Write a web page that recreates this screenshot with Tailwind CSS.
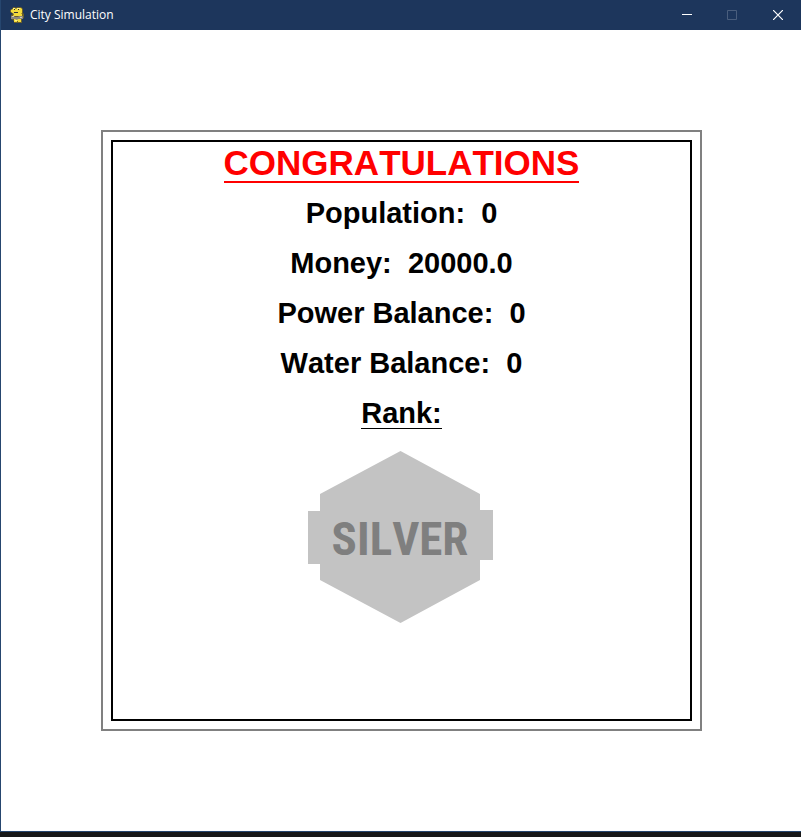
<!DOCTYPE html>
<html lang="en">
<head>
<meta charset="utf-8">
<meta name="viewport" content="width=device-width, initial-scale=1">
<title>City Simulation</title>
<script src="https://cdn.jsdelivr.net/npm/@tailwindcss/browser@4"></script>
</head>
<body class="flex min-h-screen flex-col bg-[#181818]">
<div class="flex grow flex-col border-b border-l border-[#26466f] bg-white">
  <header class="flex h-[30px] items-center bg-[#1d365c] text-white">
    <svg class="ml-2 mr-1 h-[18px] w-[17px]" viewBox="0 0 17 18" aria-hidden="true">
      <path fill="#6b5f2c" d="M4 1h2l1 1 1-1h4l2 2v4l1 1v4l-2 1v4H5v-2l-3-2V9l2-1-3-2V4l2-1z"/>
      <path fill="#f4dc3c" d="M4 2h2l1 1 1-1h4l1 1v4l-1 1H5L2 6V4l2-1zM5 8h8v2H4zM5 13h7v3H9v-1H8v1H5z"/>
      <path fill="#fff48a" d="M4 2h2v1H4zM8 2h3v1H8zM6 14h2v1H6z"/>
      <path fill="#333" d="M5 3h1v1H5zM9 3h1v1H9zM5 6h4v1H5z"/>
      <path fill="#8d887c" d="M2 10h3l1 1h3l1-1h4v3H9l-1 1-2-1H2z"/>
      <path fill="#d0cbbd" d="M3 10h2v1H3zM11 11h2v1h-2z"/>
    </svg>
    <span class="grow font-['Open_Sans','Noto_Sans',sans-serif] text-[12px] leading-4">City Simulation</span>
    <div class="flex h-full">
      <button type="button" aria-label="Minimize" class="flex w-[46px] items-center justify-center">
        <svg class="h-[10px] w-[10px]" viewBox="0 0 10 10"><path fill="#fff" d="M0 4h10v1H0z"/></svg>
      </button>
      <button type="button" aria-label="Maximize" disabled class="flex w-[44px] items-center justify-center">
        <svg class="h-[10px] w-[10px]" viewBox="0 0 10 10"><path fill="none" stroke="#4a5e7d" d="M.5.5h9v9h-9z"/></svg>
      </button>
      <button type="button" aria-label="Close" class="flex w-[47px] items-center justify-center">
        <svg class="h-[10px] w-[10px]" viewBox="0 0 10 10"><path stroke="#fff" stroke-width="1.2" d="M0 0l10 10M10 0L0 10"/></svg>
      </button>
    </div>
  </header>
  <main class="py-[100px] pl-[100px] pr-[99px]">
    <section class="flex aspect-square flex-col border-2 border-[#808080] p-2">
      <div class="flex grow flex-col items-center border-2 border-black font-['Liberation_Sans',Arial,sans-serif] text-[29px] font-bold leading-[50px] text-black [font-kerning:none]">
        <h1 class="border-b-2 border-[#ff0000] pt-[2px] text-[35px] leading-[37px] text-[#ff0000]">CONGRATULATIONS</h1>
        <div class="mt-[5px] text-center">
          <p class="whitespace-pre">Population:  0</p>
          <p class="whitespace-pre">Money:  20000.0</p>
          <p class="whitespace-pre">Power Balance:  0</p>
          <p class="whitespace-pre">Water Balance:  0</p>
        </div>
        <h2 class="mt-[9px] border-b border-black pt-[2px] leading-[29px]">Rank:</h2>
        <svg class="mt-[22px] h-[172px] w-[187px]" viewBox="0 0 187 172" role="img" aria-label="Silver rank">
          <path fill="#c3c3c3" d="M92.5 0L172 43V59H185V109H172V129L92.5 172L12 129V113H0V60H12V43Z"/>
          <text x="92" y="104" text-anchor="middle" fill="#7f7f7f" class="font-['Roboto_Condensed','Roboto',sans-serif] text-[47px] font-bold">SILVER</text>
        </svg>
      </div>
    </section>
  </main>
</div>
<footer class="h-[6px] bg-[#181818]"></footer>
</body>
</html>
